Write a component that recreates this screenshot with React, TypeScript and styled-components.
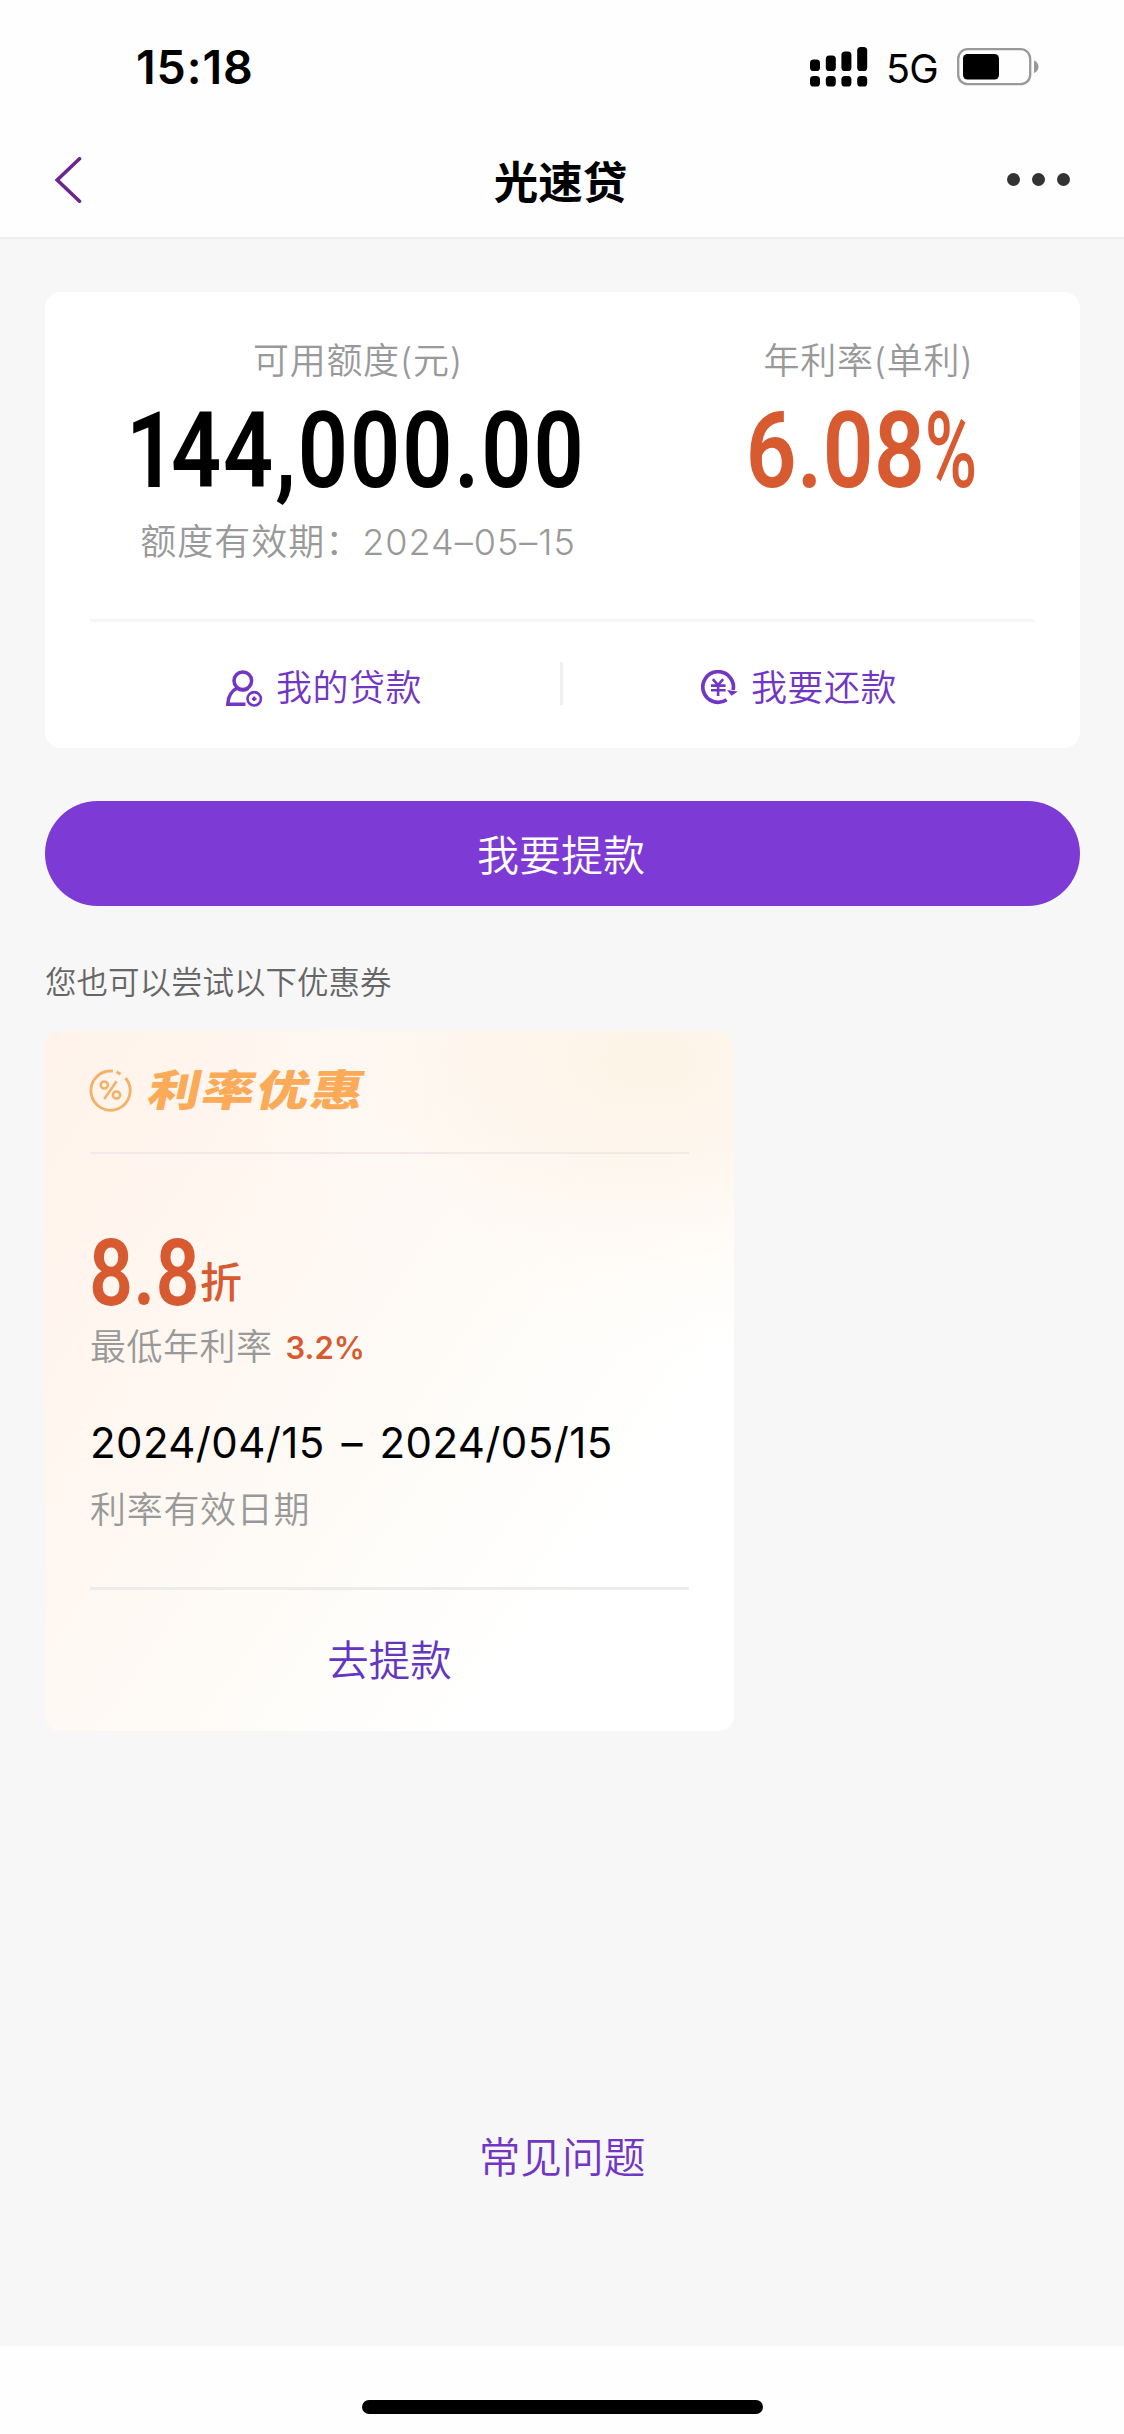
import React from "react";
import styled, { createGlobalStyle } from "styled-components";

const PURPLE = "#7136c4";
const ORANGE = "#d75a30";
const GREY = "#999999";

const GlobalStyle = createGlobalStyle`
  * { box-sizing: border-box; }
  body {
    margin: 0;
    background: #fff;
    font-family: Inter, "Noto Sans CJK SC", sans-serif;
    font-weight: 400;
    color: #000;
  }
`;

const Screen = styled.div`
  width: 1124px;
  height: 2434px;
  display: flex;
  flex-direction: column;
  background: #fefefe;
  overflow: hidden;
`;

const StatusBar = styled.div`
  height: 122px;
  padding: 12px 85px 0 136px;
  display: flex;
  align-items: center;
  justify-content: space-between;
`;

const Clock = styled.span`
  font-size: 46.5px;
  font-weight: 600;
  letter-spacing: 0.9px;
`;

const StatusIcons = styled.div`
  display: flex;
  align-items: center;
`;

const Network = styled.span`
  margin: 3px 19px 0 18px;
  font-size: 39.5px;
  letter-spacing: -0.8px;
`;

const NavBar = styled.div`
  height: 117px;
  padding: 0 54px;
  display: grid;
  grid-template-columns: 66px 1fr 66px;
  align-items: center;
  border-bottom: 2px solid #eeeeee;
`;

const Title = styled.h1`
  margin: 6px 3px 0 0;
  text-align: center;
  font-size: 44.5px;
  line-height: 60px;
  font-weight: 600;
`;

const MoreDots = styled.div`
  display: flex;
  justify-content: flex-end;
  gap: 12px;
`;

const Dot = styled.i`
  flex: none;
  width: 13px;
  height: 13px;
  border-radius: 50%;
  background: #333;
`;

const Content = styled.main`
  flex: 1;
  display: flex;
  flex-direction: column;
  padding: 53px 44px 0 45px;
  background: #f7f7f7;
`;

const LoanCard = styled.section`
  height: 456px;
  padding-top: 44px;
  border-radius: 16px;
  background: #fff;
`;

const Summary = styled.div`
  display: grid;
  grid-template-columns: 626px 395px;
  height: 283px;
`;

const SummaryCol = styled.div`
  display: flex;
  flex-direction: column;
  align-items: center;
  white-space: nowrap;
`;

const Muted = styled.span<{ $top?: number; $spacing?: number }>`
  margin-top: ${(p) => p.$top ?? 0}px;
  font-size: 36px;
  line-height: 50px;
  font-weight: 350;
  letter-spacing: ${(p) => p.$spacing ?? 0.7}px;
  color: ${GREY};
`;

const Figure = styled.strong<{ $size: number; $color: string; $stretch: number; $spacing: number }>`
  display: block;
  font-family: Roboto, "Liberation Sans", sans-serif;
  font-size: ${(p) => p.$size}px;
  line-height: 90px;
  font-weight: 600;
  letter-spacing: ${(p) => p.$spacing}px;
  color: ${(p) => p.$color};
  transform: scaleX(${(p) => p.$stretch});
`;

const LeadingOne = styled.span`
  letter-spacing: -6.5px;
`;

const PercentSign = styled.span`
  display: inline-block;
  margin-right: -19px;
  font-weight: 500;
  transform: scaleX(0.8);
  transform-origin: 0 50%;
`;

const AmountRow = styled.div<{ $shift: number }>`
  margin-top: 20px;
  height: 90px;
  padding-right: ${(p) => p.$shift}px;
  display: flex;
  justify-content: center;
`;

const Rule = styled.hr<{ $color: string; $height: number }>`
  margin: 0 45px;
  border: 0;
  height: ${(p) => p.$height}px;
  background: ${(p) => p.$color};
`;

const Actions = styled.div`
  display: grid;
  grid-template-columns: 1fr 3px 1fr;
  align-items: center;
  height: 126px;
  padding: 6px 45px 0 43px;
`;

const Action = styled.a`
  display: flex;
  align-items: center;
  justify-content: center;
  gap: 13px;
  font-size: 36px;
  line-height: 50px;
  font-weight: 350;
  letter-spacing: 0.5px;
  color: ${PURPLE};
`;

const Separator = styled.i`
  width: 3px;
  height: 43px;
  margin-bottom: 10px;
  background: #f0f0f0;
`;

const PrimaryButton = styled.button`
  margin-top: 53px;
  height: 105px;
  flex: none;
  padding: 4px 3px 0 0;
  border: 0;
  border-radius: 53px;
  background: #7d3ad4;
  color: #fff;
  font-family: inherit;
  font-size: 42px;
  line-height: 60px;
  font-weight: 350;
`;

const Hint = styled.p`
  margin: 55px 0 26px;
  font-size: 31.5px;
  line-height: 44px;
  font-weight: 350;
  color: #666;
`;

const Coupon = styled.section`
  width: 689px;
  height: 700px;
  border-radius: 15px;
  background:
    radial-gradient(ellipse 62% 42% at 88% 4%, rgba(253, 243, 230, 0.95) 0%, rgba(254, 245, 235, 0.75) 40%, rgba(255, 250, 245, 0.4) 72%, rgba(255, 255, 255, 0) 100%),
    linear-gradient(124deg, #fff3ea 0%, #fff6ef 24%, #fef9f3 42%, #fefcf9 58%, #ffffff 78%);
`;

const CouponHeader = styled.header`
  height: 121px;
  padding: 0 0 3px 44px;
  display: flex;
  align-items: center;
  gap: 17px;
`;

const CouponTitle = styled.h2`
  margin: 0;
  font-size: 43px;
  line-height: 60px;
  font-weight: 900;
  letter-spacing: 1.5px;
  color: #fbaa58;
  transform: scaleX(1.22) skewX(-10deg);
  transform-origin: 0 50%;
`;

const CouponBody = styled.div`
  height: 433px;
  padding: 78px 0 0 45px;
  display: flex;
  flex-direction: column;
  align-items: flex-start;
  white-space: nowrap;
`;

const Discount = styled.div`
  display: flex;
  align-items: flex-end;
  height: 80px;
  color: ${ORANGE};
`;

const DiscountFigure = styled.div`
  width: 110px;
  height: 80px;
  & > strong {
    margin-left: -1px;
    line-height: 84px;
    transform-origin: 0 50%;
  }
`;

const DiscountUnit = styled.span`
  font-size: 42px;
  line-height: 58px;
  font-weight: 500;
`;

const RateRow = styled.div`
  margin-top: 8px;
  display: flex;
  align-items: center;
  gap: 13px;
`;

const RateValue = styled.span`
  margin-top: 3px;
  font-size: 31px;
  line-height: 50px;
  font-weight: 600;
  color: ${ORANGE};
`;

const Period = styled.span`
  margin-top: 45px;
  font-size: 42px;
  line-height: 50px;
  letter-spacing: 0.4px;
  word-spacing: 4.5px;
`;

const CouponLink = styled.a`
  display: block;
  text-align: center;
  padding-top: 41px;
  font-size: 41.5px;
  line-height: 60px;
  font-weight: 350;
  color: #6236c0;
`;

const FaqLink = styled.a`
  margin-top: 397px;
  padding-right: 1px;
  text-align: center;
  font-size: 41.7px;
  line-height: 60px;
  font-weight: 350;
  color: ${PURPLE};
`;

const HomeArea = styled.footer`
  flex: none;
  height: 88px;
  display: flex;
  justify-content: center;
  padding-top: 54px;
`;

const HomeBar = styled.i`
  width: 401px;
  height: 14px;
  border-radius: 7px;
  background: #000;
`;

const SIGNAL = [
  { x: 0, y: 12.5 },
  { x: 15.8, y: 8.5 },
  { x: 31.4, y: 4.5 },
  { x: 47.2, y: 0 },
];

const SignalIcon = () => (
  <svg width="58" height="40" viewBox="0 0 58 40">
    {SIGNAL.map((b) => (
      <g key={b.x}>
        <rect x={b.x} y={b.y} width="10" height={24 - b.y} rx="3.6" />
        <rect x={b.x} y="29" width="10" height="10.5" rx="3.6" />
      </g>
    ))}
  </svg>
);

const BatteryIcon = () => (
  <svg width="82" height="38" viewBox="0 0 82 38">
    <rect x="1.2" y="1.2" width="72" height="35" rx="9.5" fill="none" stroke="#999" strokeWidth="2.3" />
    <rect x="6" y="6" width="36" height="25.5" rx="4.5" fill="#000" />
    <path d="M77 12.500c6 2 6 10.500 0 12.500z" fill="#999" />
  </svg>
);

const BackIcon = () => (
  <svg width="28" height="46" viewBox="0 0 28 46" fill="none" stroke="#6c2590" strokeWidth="3.6" strokeLinecap="round">
    <path d="M25.500 1.800 3.200 23l22.300 21.200" strokeLinejoin="miter" />
  </svg>
);

const UserIcon = () => (
  <svg width="37" height="37" viewBox="0 0 37 37" fill="none" stroke={PURPLE}>
    <circle cx="16.800" cy="10.700" r="8.800" strokeWidth="3.500" />
    <path d="M11.500 17.800C5.200 21 2 27 1.800 34.200H19.500" strokeWidth="3.500" />
    <path d="M11 19.200c3.400 1.900 8.200 1.900 11.600-.4" strokeWidth="2" />
    <circle cx="28.200" cy="28.800" r="6.700" strokeWidth="2.600" />
    <path d="M28.200 26.500v4.600M25.900 28.800h4.600" strokeWidth="2.200" />
  </svg>
);

const YuanIcon = () => (
  <svg width="37" height="37" viewBox="0 0 37 37" fill="none" stroke={PURPLE}>
    <path d="M25.600 29.700A15.300 15.300 0 1 1 32.100 20" strokeWidth="3.700" />
    <path d="M26 20 36.800 21.600 30.500 25.800z" fill={PURPLE} stroke="none" />
    <path d="M11.800 9.200 17 15l5.200-5.800M10 15.600h14.600M10 20.200h14.600M17.100 15v11" strokeWidth="2.600" />
  </svg>
);

const PercentIcon = () => (
  <svg width="43" height="43" viewBox="0 0 43 43" fill="none" stroke="#f5b067">
    <path d="M24 2.200A19.600 19.600 0 1 0 36.500 9" strokeWidth="2.800" />
    <path d="M27.500 2.800 31.500 5.200" strokeWidth="2.800" />
    <circle cx="15.300" cy="16" r="3.600" strokeWidth="2.500" />
    <circle cx="27.500" cy="26" r="3.600" strokeWidth="2.500" />
    <path d="M27.600 12.200 15.200 30" strokeWidth="2.500" />
  </svg>
);

export default function App() {
  return (
    <Screen>
      <GlobalStyle />
      <StatusBar>
        <Clock>15:18</Clock>
        <StatusIcons>
          <SignalIcon />
          <Network>5G</Network>
          <BatteryIcon />
        </StatusIcons>
      </StatusBar>
      <NavBar>
        <BackIcon />
        <Title>光速贷</Title>
        <MoreDots>
          <Dot />
          <Dot />
          <Dot />
        </MoreDots>
      </NavBar>

      <Content>
        <LoanCard>
          <Summary>
            <SummaryCol>
              <Muted>可用额度(元)</Muted>
              <AmountRow $shift={4}>
                <Figure $size={106} $color="#000" $stretch={0.83} $spacing={2.3}>
                  <LeadingOne>1</LeadingOne>44,000.00
                </Figure>
              </AmountRow>
              <Muted $top={21} $spacing={1}>额度有效期：2024–05–15</Muted>
            </SummaryCol>
            <SummaryCol>
              <Muted>年利率(单利)</Muted>
              <AmountRow $shift={17}>
                <Figure $size={106} $color={ORANGE} $stretch={0.84} $spacing={0.4}>
                  6.08<PercentSign>%</PercentSign>
                </Figure>
              </AmountRow>
            </SummaryCol>
          </Summary>
          <Rule $color="#f6f6f6" $height={3} />
          <Actions>
            <Action>
              <UserIcon />
              我的贷款
            </Action>
            <Separator />
            <Action>
              <YuanIcon />
              我要还款
            </Action>
          </Actions>
        </LoanCard>

        <PrimaryButton>我要提款</PrimaryButton>
        <Hint>您也可以尝试以下优惠券</Hint>

        <Coupon>
          <CouponHeader>
            <PercentIcon />
            <CouponTitle>利率优惠</CouponTitle>
          </CouponHeader>
          <Rule $color="#f3e9e8" $height={2} />
          <CouponBody>
            <Discount>
              <DiscountFigure>
                <Figure $size={92} $color={ORANGE} $stretch={0.84} $spacing={0.2}>8.8</Figure>
              </DiscountFigure>
              <DiscountUnit>折</DiscountUnit>
            </Discount>
            <RateRow>
              <Muted $spacing={0.5}>最低年利率</Muted>
              <RateValue>3.2%</RateValue>
            </RateRow>
            <Period>2024/04/15 – 2024/05/15</Period>
            <Muted $top={17}>利率有效日期</Muted>
          </CouponBody>
          <Rule $color="#eeecea" $height={3} />
          <CouponLink>去提款</CouponLink>
        </Coupon>

        <FaqLink>常见问题</FaqLink>
      </Content>

      <HomeArea>
        <HomeBar />
      </HomeArea>
    </Screen>
  );
}
